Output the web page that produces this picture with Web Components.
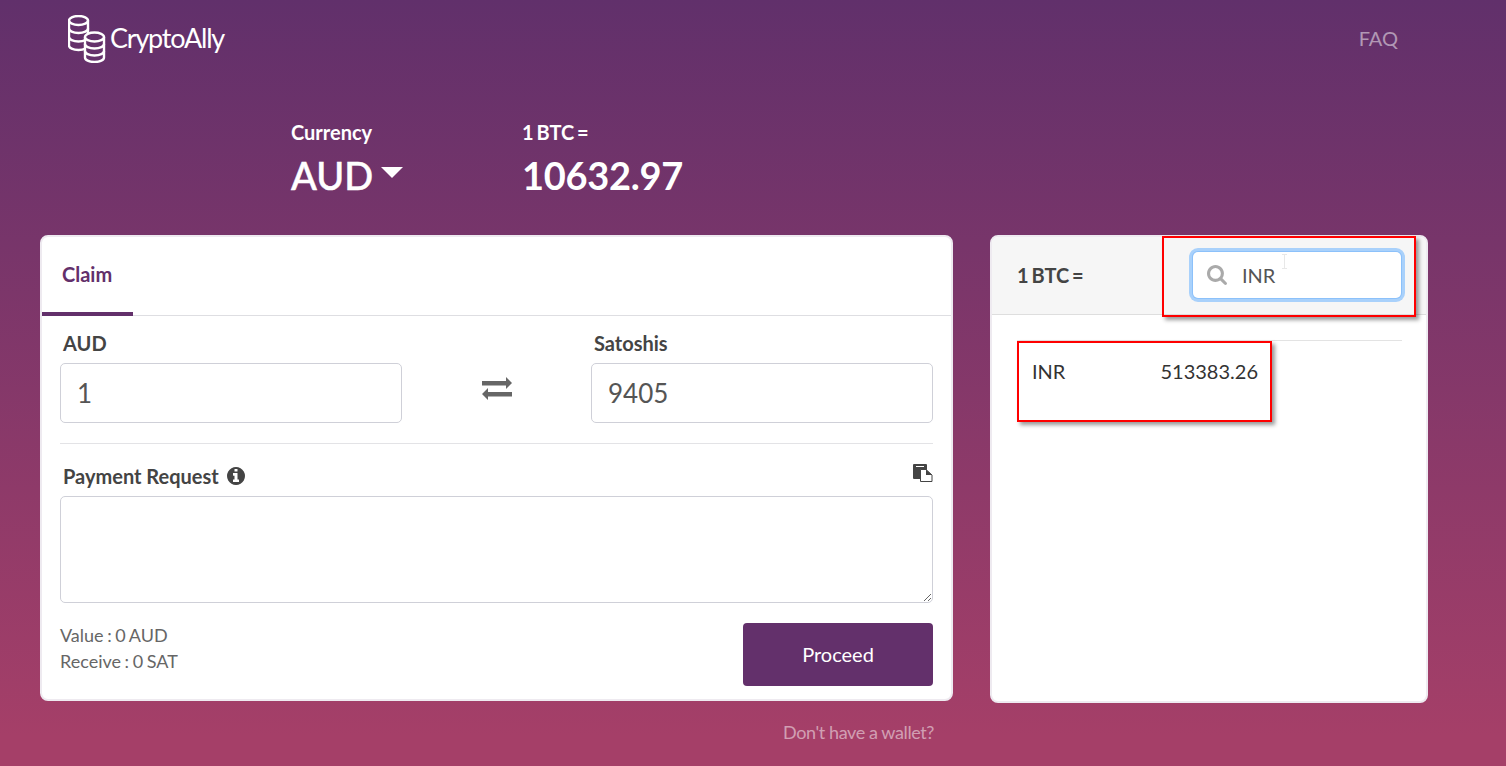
<!DOCTYPE html>
<html>
<head>
  <meta charset="utf-8">
  <title>CryptoAlly</title>
  <style>
    html, body { margin: 0; height: 100%; }
    body {
      height: 766px;
      overflow: hidden;
      background: linear-gradient(#61306b, #a53f68 96%);
      font-family: Lato, "Liberation Sans", sans-serif;
    }
  </style>

  <template id="appHeader.tpl">
    <style>
      :host { display: flex; justify-content: space-between; height: 104px; padding: 15px 108px 0 68px; box-sizing: border-box; }
      .logo { display: flex; gap: 4px; height: 48px; }
      .logo svg { display: block; }
      .name { font-size: 27px; font-weight: 400; color: #fff; line-height: 46px; letter-spacing: -1.2px; }
      a { color: rgba(255,255,255,.5); font-size: 20px; line-height: 47px; }
    </style>
    <div class="logo">
      <svg width="38" height="48" viewBox="0 0 38 48" fill="none" stroke="#fff" stroke-width="2.400">
        <path d="M1 5.500v25c0 2.500 4 4.500 9.500 4.500S20 33 20 30.500v-25"/>
        <ellipse cx="10.500" cy="5.500" rx="9.500" ry="4.500"/>
        <path d="M1 13.500c0 2.500 4 4.500 9.500 4.500S20 16 20 13.500M1 22c0 2.500 4 4.500 9.500 4.500S20 24.500 20 22"/>
        <path fill="#65326c" d="M17 22v20.500c0 2.500 4 4.500 9.500 4.500S36 45 36 42.500V22z" stroke="none"/>
        <path d="M17 22v20.500c0 2.500 4 4.500 9.500 4.500s9.500-2 9.500-4.500V22"/>
        <ellipse cx="26.500" cy="22" rx="9.500" ry="4.500" fill="#65326c"/>
        <path d="M17 29c0 2.500 4 4.500 9.500 4.500S36 31.500 36 29M17 36c0 2.500 4 4.500 9.500 4.500S36 38.500 36 36"/>
      </svg>
      <span class="name">CryptoAlly</span>
    </div>
    <a>FAQ</a>
  </template>

  <template id="rateBar.tpl">
    <style>
      :host { display: flex; height: 131px; padding-left: 291px; color: #fff; }
      .col { display: flex; flex-direction: column; }
      .first { width: 231px; }
      .label { font-size: 20px; font-weight: 700; word-spacing: -2px; line-height: 24px; margin-top: 16px; }
      .big { display: flex; align-items: center; gap: 8px; font-size: 38px; font-weight: 500; -webkit-text-stroke: .5px #fff; line-height: 48px; margin-top: 7px; }
      .rate { font-weight: 700; -webkit-text-stroke: 0; letter-spacing: -.3px; }
      .caret { width: 0; height: 0; margin-top: -5px; border: 11px solid transparent; border-top: 11px solid #fff; border-bottom: 0; }
    </style>
    <div class="col first">
      <div class="label">Currency</div>
      <div class="big">AUD <span class="caret"></span></div>
    </div>
    <div class="col">
      <div class="label">1 BTC =</div>
      <div class="big rate">10632.97</div>
    </div>
  </template>

  <template id="amountField.tpl">
    <style>
      :host { display: block; width: 342px; color: #444; }
      label { display: block; margin-left: 3px; font-size: 20px; font-weight: 700; line-height: 24px; }
      .box { height: 60px; margin-top: 8px; padding-left: 16px; box-sizing: border-box; border: 1px solid #cfd0d8; border-radius: 5px; font-size: 26px; line-height: 59px; color: #555; }
    </style>
    <label><slot name="label"></slot></label>
    <div class="box"><slot></slot></div>
  </template>

  <template id="claimCard.tpl">
    <style>
      :host { display: block; width: 913px; height: 466px; box-sizing: border-box; background: #fff; border: 2px solid #eeeaf0; border-radius: 8px; }
      .tabs { height: 78px; border-bottom: 1px solid #dedee2; }
      .tab { width: 91px; height: 79px; box-sizing: border-box; padding: 25px 0 0 20px; border-bottom: 4px solid #63306b; font-size: 20px; font-weight: 700; line-height: 24px; color: #63306b; }
      .form { padding: 15px 18px 0; }
      .amounts { display: flex; justify-content: space-between; align-items: center; }
      .swap { display: block; margin: 23px 0 0; }
      hr { height: 1px; margin: 20px 0 0; border: 0; background: #e3e3e6; }
      .request { display: flex; align-items: center; height: 24px; margin: 20px 0 0 3px; font-size: 20px; font-weight: 700; color: #444; }
      .request .info { margin-left: 8px; }
      .request .paste { margin-left: auto; transform: translateY(-3px); }
      textarea { display: block; width: 100%; height: 107px; margin-top: 8px; box-sizing: border-box; border: 1px solid #cfd0d8; border-radius: 5px; outline: 0; resize: vertical; }
      .foot { display: flex; justify-content: space-between; margin-top: 20px; }
      .summary { margin-top: -1px; font-size: 18px; line-height: 26px; word-spacing: -1px; color: #666; }
      .proceed { width: 190px; height: 63px; background: #63306b; border-radius: 4px; color: #fff; font-size: 20px; line-height: 63px; text-align: center; }
    </style>
    <div class="tabs"><div class="tab">Claim</div></div>
    <div class="form">
      <div class="amounts">
        <amount-field><span slot="label">AUD</span>1</amount-field>
        <svg class="swap" width="30" height="23" viewBox="0 0 30 23" fill="#666">
          <path d="M0 4h24V0l6 6-6 6V8.500H0zM30 15H6v-4l-6 6 6 6v-3.500h24z"/>
        </svg>
        <amount-field><span slot="label">Satoshis</span>9405</amount-field>
      </div>
      <hr>
      <div class="request">
        <span>Payment Request</span>
        <svg class="info" width="18" height="18" viewBox="128 128 1536 1536" fill="#444"><path d="M1152 1376v-160q0-14-9-23t-23-9h-96v-512q0-14-9-23t-23-9h-320q-14 0-23 9t-9 23v160q0 14 9 23t23 9h96v320h-96q-14 0-23 9t-9 23v160q0 14 9 23t23 9h448q14 0 23-9t9-23zm-128-896v-160q0-14-9-23t-23-9h-192q-14 0-23 9t-9 23v160q0 14 9 23t23 9h192q14 0 23-9t9-23zm640 416q0 209-103 385.500t-279.500 279.500-385.500 103-385.500-103-279.500-279.500-103-385.500 103-385.500 279.500-279.500 385.500-103 385.500 103 279.500 279.500 103 385.500z"/></svg>
        <svg class="paste" width="20" height="18" viewBox="0 0 20 18">
          <path fill="#444" d="M1 0h12a1 1 0 0 1 1 1v13a1 1 0 0 1-1 1H1a1 1 0 0 1-1-1V1a1 1 0 0 1 1-1z"/>
          <path fill="#fff" d="M3 2h8v1H3z"/>
          <path fill="#fff" stroke="#444" d="M7.500 5.500h5.500l6 5.500v6.500H7.500z"/>
          <path fill="#444" d="M13 5.500l6 5.500h-6z"/>
        </svg>
      </div>
      <textarea></textarea>
      <div class="foot">
        <div class="summary">Value : 0 AUD<br>Receive : 0 SAT</div>
        <div class="proceed">Proceed</div>
      </div>
    </div>
  </template>

  <template id="markBox.tpl">
    <style>
      :host { position: absolute; display: block; box-sizing: border-box; border: 2px solid #f00; box-shadow: 3px 3px 4px rgba(0,0,0,.4); pointer-events: none; }
    </style>
  </template>

  <template id="ratesCard.tpl">
    <style>
      :host { display: block; position: relative; width: 438px; height: 468px; box-sizing: border-box; background: #fff; border: 2px solid #eeeaf0; border-radius: 8px; }
      .head { display: flex; align-items: center; justify-content: space-between; height: 78px; box-sizing: border-box; padding: 0 25px 2px; background: #f6f6f6; border-bottom: 1px solid #dedede; border-radius: 6px 6px 0 0; font-size: 20px; font-weight: 700; word-spacing: -2px; color: #444; }
      .search { position: relative; display: flex; align-items: center; gap: 15px; width: 208px; height: 46px; box-sizing: border-box; padding-left: 14px; background: #fff; border-radius: 5px; box-shadow: 0 0 0 1px #8cc1fa, 0 0 0 4px #a9d1fb; font-weight: 400; color: #555; }
      .cursor { position: absolute; left: 89px; top: 2px; }
      .list { margin: 25px 24px 0 25px; border-top: 1px solid #e3e3e3; }
      .row { display: flex; justify-content: space-between; width: 226px; padding: 18px 0 0 15px; font-size: 20px; line-height: 24px; color: #333; }
      .m1 { left: 170px; top: -1px; width: 254px; height: 81px; }
      .m2 { left: 25px; top: 104px; width: 255px; height: 81px; }
    </style>
    <div class="head">
      <span>1 BTC =</span>
      <div class="search">
        <svg width="20" height="20" viewBox="0 0 1664 1664" fill="#aaa"><path d="M1152 704q0-185-131.500-316.500t-316.500-131.500-316.500 131.500-131.500 316.500 131.500 316.500 316.500 131.500 316.500-131.500 131.500-316.500zm512 832q0 52-38 90t-90 38q-54 0-90-38l-343-342q-179 124-399 124-143 0-273.500-55.500t-225-150-150-225-55.500-273.500 55.500-273.500 150-225 225-150 273.500-55.500 273.500 55.500 225 150 150 225 55.500 273.500q0 220-124 399l343 343q37 37 37 90z"/></svg>
        <span>INR</span>
        <svg class="cursor" width="5" height="15" viewBox="0 0 5 15" fill="none" stroke="#e8e8e8"><path d="M0 .500h5M2.500 .500v14M0 14.500h5"/></svg>
      </div>
    </div>
    <div class="list">
      <div class="row"><span>INR</span><span>513383.26</span></div>
    </div>
    <mark-box class="m1"></mark-box>
    <mark-box class="m2"></mark-box>
  </template>

  <template id="walletLink.tpl">
    <style>
      :host { display: block; width: 934px; margin-top: 17px; font-size: 18px; line-height: 24px; letter-spacing: -.4px; text-align: right; color: rgba(255,255,255,.5); }
    </style>
    <slot></slot>
  </template>

  <template id="claimPage.tpl">
    <style>
      :host { display: block; }
      .cards { display: flex; align-items: flex-start; gap: 37px; padding-left: 40px; }
    </style>
    <app-header></app-header>
    <rate-bar></rate-bar>
    <div class="cards">
      <claim-card></claim-card>
      <rates-card></rates-card>
    </div>
    <wallet-link>Don't have a wallet?</wallet-link>
  </template>

  <script>
    // every element just stamps its own template into an open shadow root
    function define(name, tpl) {
      customElements.define(name, class extends HTMLElement {
        constructor() {
          super();
          const shadow = this.attachShadow({ mode: 'open' });
          shadow.appendChild(document.getElementById(tpl).content.cloneNode(true));
        }
      });
    }
    define('app-header', 'appHeader.tpl');
    define('rate-bar', 'rateBar.tpl');
    define('amount-field', 'amountField.tpl');
    define('claim-card', 'claimCard.tpl');
    define('mark-box', 'markBox.tpl');
    define('rates-card', 'ratesCard.tpl');
    define('wallet-link', 'walletLink.tpl');
    define('claim-page', 'claimPage.tpl');
  </script>
</head>
<body>
  <claim-page></claim-page>
</body>
</html>
